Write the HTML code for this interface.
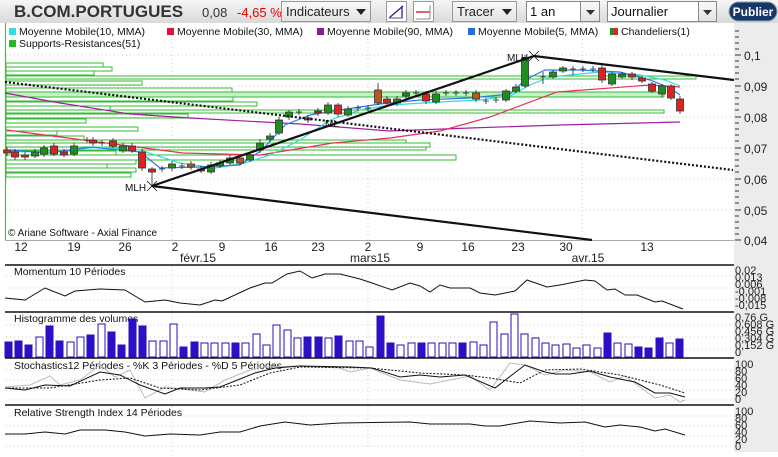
<!DOCTYPE html>
<html><head><meta charset="utf-8">
<style>
html,body{margin:0;padding:0;background:#fff;}
body{width:778px;height:452px;overflow:hidden;position:relative;font-family:"Liberation Sans",sans-serif;}
svg text{font-family:"Liberation Sans",sans-serif;}
</style></head><body>
<svg width="778" height="452" viewBox="0 0 778 452" xmlns="http://www.w3.org/2000/svg">
<defs>
<linearGradient id="tb" x1="0" y1="0" x2="0" y2="1"><stop offset="0" stop-color="#f6f6f6"/><stop offset="1" stop-color="#d9d9d9"/></linearGradient>
<linearGradient id="bt" x1="0" y1="0" x2="0" y2="1"><stop offset="0" stop-color="#fafafa"/><stop offset="1" stop-color="#e2e2e2"/></linearGradient>
</defs>
<rect x="0" y="0" width="778" height="23" fill="url(#tb)"/>
<text x="14" y="17" font-size="17" font-weight="bold" fill="#333">B.COM.PORTUGUES</text>
<text x="202" y="17" font-size="13" fill="#333">0,08</text>
<text x="237" y="17" font-size="13" fill="#e00">-4,65 %</text>
<rect x="281.5" y="1.5" width="89" height="20" fill="url(#bt)" stroke="#999"/>
<text x="286" y="16" font-size="13" fill="#222">Indicateurs</text>
<path d="M356 9h10l-5 6z" fill="#222"/>
<rect x="386.5" y="1.5" width="20" height="20" fill="#fff" stroke="#999"/>
<path d="M389 18L403 6M402 6v12H390" stroke="#22a" fill="none" stroke-width="1.3"/>
<path d="M389 18h14" stroke="#888"/>
<rect x="413.5" y="1.5" width="20" height="20" fill="#fff" stroke="#999"/>
<path d="M416 12h14" stroke="#c00" stroke-width="1.2"/><path d="M430 5v14M416 19h14" stroke="#888"/>
<rect x="452.5" y="1.5" width="64" height="20" fill="url(#bt)" stroke="#999"/>
<text x="457" y="16" font-size="13" fill="#222">Tracer</text>
<path d="M502 9h10l-5 6z" fill="#222"/>
<rect x="526.5" y="1.5" width="54" height="20" fill="#fff" stroke="#888"/>
<text x="530" y="16" font-size="13" fill="#111">1 an</text>
<rect x="580.5" y="1.5" width="19" height="20" fill="url(#bt)" stroke="#888"/>
<path d="M586 10h9l-4.5 5z" fill="#333"/>
<rect x="607.5" y="1.5" width="91" height="20" fill="#fff" stroke="#888"/>
<text x="611" y="16" font-size="13" fill="#111">Journalier</text>
<rect x="698.5" y="1.5" width="18" height="20" fill="url(#bt)" stroke="#888"/>
<path d="M703 10h9l-4.5 5z" fill="#333"/>
<rect x="729" y="2" width="48" height="19" rx="9.5" fill="#17376b" stroke="#8aa"/>
<text x="753" y="16" font-size="12" font-weight="bold" fill="#fff" text-anchor="middle">Publier</text>

<rect x="734" y="23" width="44" height="429" fill="#ececec"/>

<g stroke="#ccc" stroke-dasharray="1,3">
<path d="M6 55H734M6 86H734M6 117H734M6 148H734M6 179H734M6 210H734"/>
<path d="M172 23V240M368 23V240M582 23V240"/>
<path d="M6 276H734M6 288H734M6 300H734M172 266V312M368 266V312M582 266V312"/>
<path d="M6 325H734M6 337H734M6 349H734M172 313V357M368 313V357M582 313V357"/>
<path d="M6 370H734M6 380H734M6 390H734M6 400H734M172 359V404M368 359V404M582 359V404"/>
<path d="M6 416H734M6 426H734M6 436H734M6 446H734M172 406V452M368 406V452M582 406V452"/>
</g>
<path d="M5.5 23V240" stroke="#3c3" stroke-width="1.2"/>
<path d="M5 240.5H734" stroke="#aaa"/>

<g fill="none" stroke="#33bb33" stroke-width="1">
<rect x="6" y="63" width="97" height="4"/>
<rect x="6" y="67" width="106" height="4"/>
<rect x="6" y="71" width="88" height="4"/>
<rect x="6" y="76" width="690" height="3"/>
<rect x="6" y="81" width="136" height="4"/>
<rect x="6" y="88" width="226" height="4"/>
<rect x="6" y="92" width="658" height="5" fill="#c8f0c8"/>
<rect x="6" y="97" width="227" height="4"/>
<rect x="6" y="102" width="251" height="4"/>
<rect x="6" y="106" width="104" height="4"/>
<rect x="6" y="110" width="658" height="3"/>
<rect x="6" y="114" width="182" height="4"/>
<rect x="6" y="119" width="80" height="4"/>
<rect x="6" y="127" width="132" height="4"/>
<rect x="6" y="131" width="51" height="4"/>
<rect x="6" y="136" width="78" height="4"/>
<rect x="6" y="140" width="400" height="3"/>
<rect x="6" y="143" width="424" height="4"/>
<rect x="6" y="147" width="420" height="3"/>
<rect x="6" y="151" width="110" height="4"/>
<rect x="6" y="155" width="450" height="5"/>
<rect x="6" y="160" width="130" height="4"/>
<rect x="6" y="164" width="101" height="4"/>
<rect x="6" y="168" width="130" height="4"/>
<rect x="6" y="173" width="125" height="4"/>
</g>

<polyline fill="none" stroke="#a020a0" stroke-width="1.2" points="5,93 60,103 130,114 190,118 300,124 390,131 470,128 560,125 640,123 680,122"/>
<polyline fill="none" stroke="#e8305a" stroke-width="1.2" points="7,130 83,140 183,153 260,155 333,143 390,138 440,131 490,117 557,92 650,85 680,87"/>
<polyline fill="none" stroke="#33dddd" stroke-width="1.2" points="7,152 60,151 100,147 140,150 180,163 215,168 245,163 270,155 300,140 330,120 360,110 390,105 440,102 480,100 510,96 530,85 550,77 600,72 640,75 665,80 680,86"/>
<polyline fill="none" stroke="#3377ee" stroke-width="1.2" points="7,150 50,153 90,147 140,152 160,168 200,167 240,165 262,150 285,125 310,115 340,110 380,104 420,100 470,98 510,94 525,80 545,70 580,70 620,72 650,80 670,88 680,95"/>

<g stroke="#222" stroke-width="0.8">
<path d="M84 140h6M87 137v6M99 143h6M102 140v6M159 169h6M162 166v6M179 166h6M182 163v6M296 112h6M299 109v6M355 108h6M358 105v6M365 108h6M368 105v6M413 93h6M416 90v6M443 93h6M446 90v6M453 93h6M456 90v6M463 93h6M466 90v6M483 101h6M486 98v6M493 100h6M496 97v6M540 77h6M543 72v12M570 69h6M573 66v9M580 69h6M583 66v6M590 69h6M593 66v6"/>
</g>
<g stroke="#222" stroke-width="0.8">
<path d="M7 147v9M15 149v11M25 152v8M35 149v9M44 145v12M54 143v13M64 149v8M74 143v13M93 137v9M113 138v10M123 143v10M132 143v10M142 149v22M152 167v20M172 161v10M191 161v9M201 166v7M211 162v12M220 160v8M230 155v10M240 155v10M250 152v10M260 139v14M270 133v9M279 117v18M289 110v10M308 115v8M318 108v8M328 102v13M338 103v14M348 106v11M378 83v22M387 96v10M397 96v10M406 90v9M426 91v13M436 91v13M476 90v12M506 89v13M516 84v9M525 55v33M553 70v9M563 66v7M602 65v18M612 72v14M622 72v7M632 72v8M642 76v7M652 82v11M662 84v13M671 84v16M680 96v18"/>
</g>
<g stroke="#333" stroke-width="0.8">
<rect x="3.5" y="150" width="7" height="3" fill="#d22"/>
<rect x="11.5" y="152" width="7" height="5" fill="#d22"/>
<rect x="21.5" y="155" width="7" height="2" fill="#d22"/>
<rect x="31.5" y="152" width="7" height="4" fill="#1e8f1e"/>
<rect x="40.5" y="148" width="7" height="6" fill="#1e8f1e"/>
<rect x="50.5" y="146" width="7" height="8" fill="#d22"/>
<rect x="60.5" y="152" width="7" height="3" fill="#d22"/>
<rect x="70.5" y="146" width="7" height="8" fill="#1e8f1e"/>
<rect x="89.5" y="140" width="7" height="3" fill="#d22"/>
<rect x="109.5" y="141" width="7" height="5" fill="#d22"/>
<rect x="119.5" y="146" width="7" height="5" fill="#1e8f1e"/>
<rect x="128.5" y="146" width="7" height="5" fill="#d22"/>
<rect x="138.5" y="152" width="7" height="16" fill="#d22"/>
<rect x="148.5" y="169" width="7" height="3" fill="#d22"/>
<rect x="168.5" y="164" width="7" height="4" fill="#1e8f1e"/>
<rect x="187.5" y="164" width="7" height="3" fill="#b85a20"/>
<rect x="197.5" y="169" width="7" height="2" fill="#d22"/>
<rect x="207.5" y="165" width="7" height="7" fill="#1e8f1e"/>
<rect x="216.5" y="163" width="7" height="3" fill="#1e8f1e"/>
<rect x="226.5" y="158" width="7" height="5" fill="#1e8f1e"/>
<rect x="236.5" y="158" width="7" height="5" fill="#b85a20"/>
<rect x="246.5" y="155" width="7" height="5" fill="#1e8f1e"/>
<rect x="256.5" y="143" width="7" height="7" fill="#1e8f1e"/>
<rect x="266.5" y="136" width="7" height="3" fill="#1e8f1e"/>
<rect x="275.5" y="120" width="7" height="13" fill="#1e8f1e"/>
<rect x="285.5" y="112" width="7" height="5" fill="#1e8f1e"/>
<rect x="304.5" y="118" width="7" height="2" fill="#d22"/>
<rect x="314.5" y="111" width="7" height="2" fill="#d22"/>
<rect x="324.5" y="105" width="7" height="8" fill="#1e8f1e"/>
<rect x="334.5" y="105" width="7" height="9" fill="#d22"/>
<rect x="344.5" y="109" width="7" height="6" fill="#1e8f1e"/>
<rect x="374.5" y="90" width="7" height="13" fill="#b85a20"/>
<rect x="383.5" y="99" width="7" height="4" fill="#d22"/>
<rect x="393.5" y="99" width="7" height="4" fill="#1e8f1e"/>
<rect x="402.5" y="93" width="7" height="3" fill="#1e8f1e"/>
<rect x="422.5" y="94" width="7" height="7" fill="#d22"/>
<rect x="432.5" y="94" width="7" height="8" fill="#1e8f1e"/>
<rect x="472.5" y="93" width="7" height="6" fill="#b85a20"/>
<rect x="502.5" y="91" width="7" height="9" fill="#1e8f1e"/>
<rect x="512.5" y="87" width="7" height="4" fill="#1e8f1e"/>
<rect x="521.5" y="58" width="7" height="28" fill="#1e8f1e"/>
<rect x="549.5" y="72" width="7" height="5" fill="#1e8f1e"/>
<rect x="559.5" y="68" width="7" height="3" fill="#1e8f1e"/>
<rect x="598.5" y="68" width="7" height="12" fill="#d22"/>
<rect x="608.5" y="74" width="7" height="10" fill="#1e8f1e"/>
<rect x="618.5" y="74" width="7" height="3" fill="#1e8f1e"/>
<rect x="628.5" y="74" width="7" height="3" fill="#d22"/>
<rect x="638.5" y="78" width="7" height="3" fill="#d22"/>
<rect x="648.5" y="84" width="7" height="7" fill="#d22"/>
<rect x="658.5" y="86" width="7" height="8" fill="#1e8f1e"/>
<rect x="667.5" y="86" width="7" height="12" fill="#d22"/>
<rect x="676.5" y="99" width="7" height="12" fill="#d22"/>
</g>

<path d="M5 82L733 170" stroke="#111" stroke-width="2.2" stroke-dasharray="2,2"/>
<path d="M152 186L534 56L734 80M152 186L592 240" stroke="#111" stroke-width="2.2" fill="none"/>
<path d="M147 181l10 10M157 181l-10 10M529 51l10 10M539 51l-10 10" stroke="#111" stroke-width="0.8"/>
<text x="125" y="191" font-size="10" fill="#111">MLH</text>
<text x="507" y="61" font-size="10" fill="#111">MLH</text>
<text x="325" y="127" font-size="10" fill="#111">ML</text>

<g font-size="10.5" fill="#111">
<rect x="9" y="28" width="7" height="7" fill="#33dddd"/><text x="19" y="35">Moyenne Mobile(10, MMA)</text>
<rect x="167" y="28" width="7" height="7" fill="#e8103a"/><text x="177" y="35">Moyenne Mobile(30, MMA)</text>
<rect x="317" y="28" width="7" height="7" fill="#8a1a9a"/><text x="327" y="35">Moyenne Mobile(90, MMA)</text>
<rect x="468" y="28" width="7" height="7" fill="#2a6ae0"/><text x="478" y="35">Moyenne Mobile(5, MMA)</text>
<rect x="610" y="28" width="4" height="7" fill="#1e8f1e"/><rect x="614" y="28" width="4" height="7" fill="#d22"/><text x="621" y="35">Chandeliers(1)</text>
<rect x="9" y="40" width="7" height="7" fill="#22bb22"/><text x="19" y="47">Supports-Resistances(51)</text>
</g>
<text x="8" y="236" font-size="10" fill="#111">© Ariane Software - Axial Finance</text>

<g stroke="#333"><path d="M735 31h4M735 37h4M735 43h4M735 49h4M735 55h6M735 61h4M735 67h4M735 73h4M735 79h4M735 86h6M735 92h4M735 98h4M735 104h4M735 110h4M735 117h6M735 123h4M735 129h4M735 135h4M735 141h4M735 148h6M735 154h4M735 160h4M735 166h4M735 172h4M735 179h6M735 185h4M735 191h4M735 197h4M735 203h4M735 210h6M735 216h4M735 222h4M735 228h4M735 234h4M735 240h6"/></g>
<g font-size="12" fill="#222">
<text x="744" y="60">0,1</text><text x="744" y="91">0,09</text><text x="744" y="122">0,08</text><text x="744" y="153">0,07</text><text x="744" y="184">0,06</text><text x="744" y="215">0,05</text><text x="744" y="245">0,04</text>
</g>

<g font-size="12" fill="#222" text-anchor="middle">
<text x="21" y="251">12</text><text x="74" y="251">19</text><text x="125" y="251">26</text><text x="175" y="251">2</text><text x="222" y="251">9</text><text x="271" y="251">16</text><text x="318" y="251">23</text><text x="368" y="251">2</text><text x="420" y="251">9</text><text x="468" y="251">16</text><text x="518" y="251">23</text><text x="566" y="251">30</text><text x="647" y="251">13</text>
<text x="198" y="262">févr.15</text><text x="370" y="262">mars15</text><text x="588" y="262">avr.15</text>
</g>

<g stroke="#111" stroke-width="1.5"><path d="M5 265H734M5 312H734M5 358H734M5 405H734"/></g>

<g font-size="10.5" fill="#111">
<text x="14" y="275">Momentum 10 Périodes</text>
<text x="14" y="322">Histogramme des volumes</text>
<text x="14" y="369">Stochastics12 Périodes  -  %K 3 Périodes  -  %D 5 Périodes</text>
<text x="14" y="416">Relative Strength Index 14 Périodes</text>
</g>

<polyline fill="none" stroke="#111" stroke-width="1" points="5,298 25,300 45,288 65,296 75,291 100,289 125,290 145,302 165,300 180,303 200,305 215,300 222,301 250,288 265,283 272,283 287,274 300,271 312,278 325,274 340,274 360,279 372,283 392,290 410,283 420,286 430,292 440,285 450,288 470,288 480,293 495,295 515,291 527,280 547,287 560,285 585,280 595,281 607,290 615,289 625,295 637,295 655,302 662,301 683,309"/>
<g font-size="11" fill="#222">
<text x="735" y="274">0,02</text><text x="735" y="281">0,013</text><text x="735" y="288">0,006</text><text x="735" y="295">-0,001</text><text x="735" y="302">-0,008</text><text x="735" y="309">-0,015</text>
</g>

<g stroke="#2a10b8" stroke-width="1">
<rect x="5" y="342" width="7" height="15" fill="#2a10c8"/>
<rect x="15" y="341" width="7" height="16" fill="#2a10c8"/>
<rect x="25" y="345" width="7" height="12" fill="#2a10c8"/>
<rect x="36" y="337" width="7" height="20" fill="#fff"/>
<rect x="46" y="326" width="7" height="31" fill="#2a10c8"/>
<rect x="56" y="341" width="7" height="16" fill="#2a10c8"/>
<rect x="67" y="342" width="7" height="15" fill="#fff"/>
<rect x="77" y="337" width="7" height="20" fill="#fff"/>
<rect x="87" y="335" width="7" height="22" fill="#2a10c8"/>
<rect x="98" y="324" width="7" height="33" fill="#fff"/>
<rect x="108" y="332" width="7" height="25" fill="#2a10c8"/>
<rect x="118" y="345" width="7" height="12" fill="#2a10c8"/>
<rect x="129" y="319" width="7" height="38" fill="#2a10c8"/>
<rect x="139" y="326" width="7" height="31" fill="#2a10c8"/>
<rect x="149" y="341" width="7" height="16" fill="#fff"/>
<rect x="160" y="341" width="7" height="16" fill="#fff"/>
<rect x="170" y="324" width="7" height="33" fill="#fff"/>
<rect x="180" y="347" width="7" height="10" fill="#2a10c8"/>
<rect x="191" y="342" width="7" height="15" fill="#2a10c8"/>
<rect x="201" y="343" width="7" height="14" fill="#fff"/>
<rect x="211" y="343" width="7" height="14" fill="#fff"/>
<rect x="222" y="343" width="7" height="14" fill="#fff"/>
<rect x="232" y="343" width="7" height="14" fill="#2a10c8"/>
<rect x="242" y="343" width="7" height="14" fill="#fff"/>
<rect x="253" y="334" width="7" height="23" fill="#fff"/>
<rect x="263" y="345" width="7" height="12" fill="#fff"/>
<rect x="273" y="325" width="7" height="32" fill="#fff"/>
<rect x="284" y="330" width="7" height="27" fill="#fff"/>
<rect x="294" y="338" width="7" height="19" fill="#fff"/>
<rect x="304" y="337" width="7" height="20" fill="#2a10c8"/>
<rect x="315" y="337" width="7" height="20" fill="#2a10c8"/>
<rect x="325" y="338" width="7" height="19" fill="#fff"/>
<rect x="335" y="336" width="7" height="21" fill="#2a10c8"/>
<rect x="346" y="341" width="7" height="16" fill="#fff"/>
<rect x="356" y="341" width="7" height="16" fill="#fff"/>
<rect x="366" y="347" width="7" height="10" fill="#fff"/>
<rect x="377" y="316" width="7" height="41" fill="#2a10c8"/>
<rect x="387" y="343" width="7" height="14" fill="#2a10c8"/>
<rect x="397" y="345" width="7" height="12" fill="#fff"/>
<rect x="408" y="343" width="7" height="14" fill="#fff"/>
<rect x="418" y="343" width="7" height="14" fill="#2a10c8"/>
<rect x="428" y="343" width="7" height="14" fill="#fff"/>
<rect x="439" y="343" width="7" height="14" fill="#fff"/>
<rect x="449" y="343" width="7" height="14" fill="#fff"/>
<rect x="459" y="343" width="7" height="14" fill="#2a10c8"/>
<rect x="470" y="342" width="7" height="15" fill="#fff"/>
<rect x="480" y="345" width="7" height="12" fill="#fff"/>
<rect x="490" y="322" width="7" height="35" fill="#fff"/>
<rect x="501" y="334" width="7" height="23" fill="#fff"/>
<rect x="511" y="314" width="7" height="43" fill="#fff"/>
<rect x="521" y="334" width="7" height="23" fill="#fff"/>
<rect x="532" y="338" width="7" height="19" fill="#fff"/>
<rect x="542" y="343" width="7" height="14" fill="#fff"/>
<rect x="552" y="345" width="7" height="12" fill="#fff"/>
<rect x="563" y="344" width="7" height="13" fill="#fff"/>
<rect x="573" y="348" width="7" height="9" fill="#fff"/>
<rect x="583" y="345" width="7" height="12" fill="#fff"/>
<rect x="594" y="348" width="7" height="9" fill="#fff"/>
<rect x="604" y="333" width="7" height="24" fill="#2a10c8"/>
<rect x="614" y="343" width="7" height="14" fill="#fff"/>
<rect x="625" y="344" width="7" height="13" fill="#fff"/>
<rect x="635" y="347" width="7" height="10" fill="#2a10c8"/>
<rect x="645" y="348" width="7" height="9" fill="#2a10c8"/>
<rect x="656" y="338" width="7" height="19" fill="#2a10c8"/>
<rect x="666" y="343" width="7" height="14" fill="#fff"/>
<rect x="676" y="339" width="7" height="18" fill="#2a10c8"/>
</g>
<g font-size="11" fill="#222">
<text x="735" y="321">0,76 G</text><text x="735" y="328">0,608 G</text><text x="735" y="335">0,456 G</text><text x="735" y="342">0,304 G</text><text x="735" y="349">0,152 G</text><text x="735" y="356">0</text>
</g>

<polyline fill="none" stroke="#bbb" stroke-width="1" points="5,387 30,385 50,376 60,385 80,380 100,365 115,377 130,370 145,398 165,387 190,390 205,392 225,380 245,372 260,367 300,366 340,368 350,372 370,368 400,380 430,384 450,380 470,376 490,390 510,363 525,365 545,375 565,370 590,372 610,382 625,376 655,398 670,395 680,402 685,400"/>
<polyline fill="none" stroke="#111" stroke-width="1" stroke-dasharray="2,1.5" points="5,388 50,388 100,380 130,378 160,388 200,390 240,385 270,373 300,367 370,368 420,373 465,375 490,378 520,383 545,370 580,369 620,375 660,385 685,393"/>
<polyline fill="none" stroke="#111" stroke-width="1" points="5,388 25,390 45,385 70,386 100,372 120,375 140,385 165,394 180,388 205,388 220,387 235,381 255,373 275,368 300,366 350,367 372,368 400,377 420,375 440,377 465,375 495,388 525,365 545,372 555,374 570,374 590,371 610,377 635,382 655,393 670,393 685,397"/>
<g font-size="11" fill="#222">
<text x="735" y="368">100</text><text x="735" y="375">80</text><text x="735" y="382">60</text><text x="735" y="389">40</text><text x="735" y="396">20</text><text x="735" y="403">0</text>
</g>

<polyline fill="none" stroke="#111" stroke-width="1" points="5,434 25,434 45,432 65,434 80,430 105,430 125,432 145,436 170,434 200,435 220,432 240,432 260,426 285,422 310,425 340,423 410,422 430,424 470,424 485,426 500,426 530,421 560,423 585,422 605,427 620,425 640,427 655,431 665,429 685,435"/>
<g font-size="11" fill="#222">
<text x="735" y="415">100</text><text x="735" y="422">80</text><text x="735" y="429">60</text><text x="735" y="436">40</text><text x="735" y="443">20</text><text x="735" y="450">0</text>
</g>
</svg>
</body></html>
